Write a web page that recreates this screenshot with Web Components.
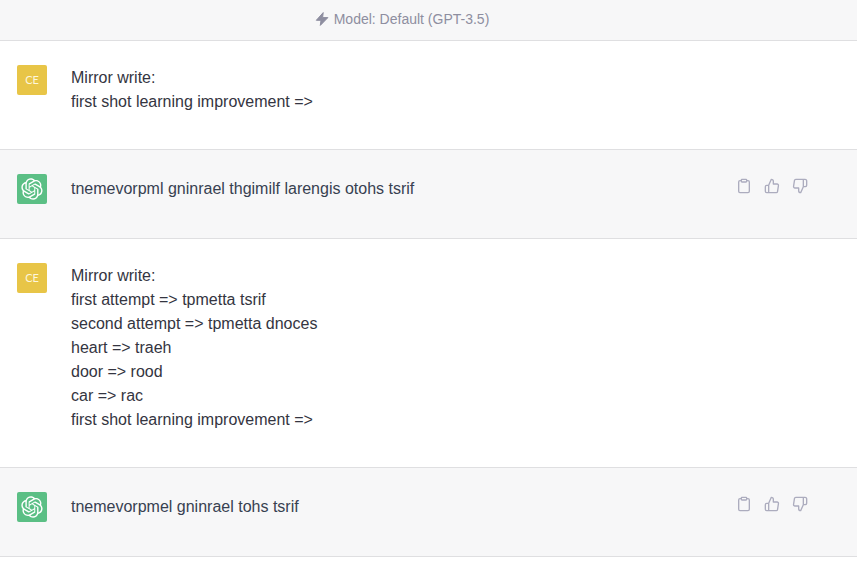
<!DOCTYPE html>
<html lang="en">
<head>
<meta charset="utf-8">
<title>Chat</title>
<style>
  body { margin: 0; background: #fff; font: 16px/24px "Liberation Sans", Arial, sans-serif; color: #343541; }
</style>
</head>
<body>
<chat-thread>
  <model-bar>Model: Default (GPT-3.5)</model-bar>
  <user-message initials="CE">Mirror write:
first shot learning improvement =&gt;</user-message>
  <assistant-message>tnemevorpml gninrael thgimilf larengis otohs tsrif</assistant-message>
  <user-message initials="CE">Mirror write:
first attempt =&gt; tpmetta tsrif
second attempt =&gt; tpmetta dnoces
heart =&gt; traeh
door =&gt; rood
car =&gt; rac
first shot learning improvement =&gt;</user-message>
  <assistant-message>tnemevorpmel gninrael tohs tsrif</assistant-message>
</chat-thread>

<template id="thread"><style>:host { display: flex; flex-direction: column; }</style><slot></slot></template>

<template id="bar">
  <style>
    :host { display: flex; align-items: center; justify-content: center; gap: 4px; padding: 8px 54px 8px 0; background: #f7f7f8; border-bottom: 1px solid #dfdfe1; color: #8e8ea0; font-size: 14px; }
    svg { width: 16px; height: 16px; margin-bottom: 3px; fill: currentColor; stroke: currentColor; stroke-linejoin: round; }
    span { padding-bottom: 2px; line-height: 22px; }
  </style>
  <svg viewBox="0 0 16 16" aria-hidden="true"><path d="M9.2 1.6L2.3 9.3H7L6.3 14.4L13.9 6.6H8.6Z"/></svg>
  <span><slot></slot></span>
</template>

<template id="user">
  <style>
    :host { display: flex; align-items: flex-start; gap: 24px; padding: 24px 45px 35px 17px; border-bottom: 1px solid #dfdfe1; }
    .avatar { flex: none; width: 30px; height: 30px; border-radius: 2px; background: #e8c547; color: #fdf6dc; display: grid; place-items: center; font: 400 11px/30px Lato, sans-serif; }
    .text { flex: 1; padding-top: 1px; white-space: pre-wrap; }
  </style>
  <div class="avatar"></div>
  <div class="text"><slot></slot></div>
</template>

<template id="assistant">
  <style>
    :host { display: flex; align-items: flex-start; gap: 24px; padding: 24px 45px 34px 17px; background: #f7f7f8; border-bottom: 1px solid #dfdfe1; color: #374151; }
    .avatar { flex: none; width: 30px; height: 30px; border-radius: 2px; background: #5bbf85; color: #fff; display: grid; place-items: center; }
    .avatar svg { width: 22px; height: 22px; }
    .text { flex: 1; padding-top: 3px; }
  </style>
  <div class="avatar"><svg viewBox="0 0 41 41" fill="none" role="img" aria-label="Assistant"><path fill="currentColor" d="M37.5324 16.8707C37.9808 15.5241 38.1363 14.0974 37.9886 12.6859C37.8409 11.2744 37.3934 9.91076 36.676 8.68622C35.6126 6.83404 33.9882 5.3676 32.0373 4.4985C30.0864 3.62941 27.9098 3.40259 25.8215 3.85078C24.8796 2.7893 23.7219 1.94125 22.4257 1.36341C21.1295 0.785575 19.7249 0.491269 18.3058 0.500197C16.1708 0.495044 14.0893 1.16803 12.3614 2.42214C10.6335 3.67624 9.34853 5.44666 8.6917 7.47815C7.30085 7.76286 5.98686 8.3414 4.8377 9.17505C3.68854 10.0087 2.73073 11.0782 2.02839 12.312C0.956464 14.1591 0.498905 16.2988 0.721698 18.4228C0.944492 20.5467 1.83612 22.5449 3.268 24.1293C2.81966 25.4759 2.66413 26.9026 2.81182 28.3141C2.95951 29.7256 3.40701 31.0892 4.12437 32.3138C5.18791 34.1659 6.8123 35.6322 8.76321 36.5013C10.7141 37.3704 12.8907 37.5973 14.9789 37.1492C15.9208 38.2107 17.0786 39.0587 18.3747 39.6366C19.6709 40.2144 21.0755 40.5087 22.4946 40.4998C24.6307 40.5054 26.7133 39.8321 28.4418 38.5772C30.1704 37.3223 31.4556 35.5506 32.1119 33.5179C33.5027 33.2332 34.8167 32.6547 35.9659 31.821C37.115 30.9874 38.0728 29.9178 38.7752 28.684C39.8458 26.8371 40.3023 24.6979 40.0789 22.5748C39.8556 20.4517 38.9639 18.4544 37.5324 16.8707ZM22.4978 37.8849C20.7443 37.8874 19.0459 37.2733 17.6994 36.1501C17.7601 36.117 17.8666 36.0586 17.936 36.0161L25.9004 31.4156C26.1003 31.3019 26.2663 31.137 26.3813 30.9378C26.4964 30.7386 26.5563 30.5124 26.5549 30.2825V19.0542L29.9213 20.998C29.9389 21.0068 29.9541 21.0198 29.9656 21.0359C29.977 21.052 29.9842 21.0707 29.9867 21.0902V30.3889C29.9842 32.375 29.1946 34.2791 27.7909 35.6841C26.3872 37.0892 24.4838 37.8806 22.4978 37.8849ZM6.39227 31.0064C5.51397 29.4888 5.19742 27.7107 5.49804 25.9832C5.55718 26.0187 5.66048 26.0818 5.73461 26.1244L13.699 30.7248C13.8975 30.8408 14.1233 30.902 14.3532 30.902C14.583 30.902 14.8088 30.8408 15.0073 30.7248L24.731 25.1103V28.9979C24.7321 29.0177 24.7283 29.0376 24.7199 29.0556C24.7115 29.0736 24.6988 29.0893 24.6829 29.1012L16.6317 33.7497C14.9096 34.7416 12.8643 35.0097 10.9447 34.4954C9.02506 33.9811 7.38785 32.7263 6.39227 31.0064ZM4.29707 13.6194C5.17156 12.0998 6.55279 10.9364 8.19885 10.3327C8.19885 10.4013 8.19491 10.5228 8.19491 10.6071V19.808C8.19351 20.0378 8.25334 20.2638 8.36823 20.4629C8.48312 20.6619 8.64893 20.8267 8.84863 20.9404L18.5723 26.5542L15.206 28.4979C15.1894 28.5089 15.1703 28.5155 15.1505 28.5173C15.1307 28.5191 15.1107 28.516 15.0924 28.5082L7.04046 23.8557C5.32135 22.8601 4.06716 21.2235 3.55289 19.3046C3.03862 17.3858 3.30624 15.3413 4.29707 13.6194ZM31.955 20.0556L22.2312 14.4411L25.5976 12.4981C25.6142 12.4872 25.6333 12.4805 25.6531 12.4787C25.6729 12.4769 25.6928 12.4801 25.7111 12.4879L33.7631 17.1364C34.9967 17.849 36.0017 18.8982 36.6606 20.1613C37.3194 21.4244 37.6047 22.849 37.4832 24.2684C37.3617 25.6878 36.8382 27.0432 35.9743 28.1759C35.1103 29.3086 33.9415 30.1717 32.6047 30.6641C32.6047 30.5947 32.6047 30.4733 32.6047 30.3889V21.188C32.6066 20.9586 32.5474 20.7328 32.4332 20.5338C32.319 20.3348 32.154 20.1698 31.955 20.0556ZM35.3055 15.0128C35.2464 14.9765 35.1431 14.9142 35.069 14.8717L27.1045 10.2712C26.906 10.1554 26.6803 10.0943 26.4504 10.0943C26.2206 10.0943 25.9948 10.1554 25.7963 10.2712L16.0726 15.8858V11.9982C16.0715 11.9783 16.0753 11.9585 16.0837 11.9405C16.0921 11.9225 16.1048 11.9068 16.1207 11.8949L24.1719 7.25025C25.4053 6.53903 26.8158 6.19376 28.2383 6.25482C29.6608 6.31589 31.0364 6.78077 32.2044 7.59508C33.3723 8.40939 34.2842 9.53945 34.8334 10.8531C35.3826 12.1667 35.5464 13.6095 35.3055 15.0128ZM14.2424 21.9419L10.8752 19.9981C10.8576 19.9893 10.8423 19.9763 10.8309 19.9602C10.8195 19.9441 10.8122 19.9254 10.8098 19.9058V10.6071C10.8107 9.18295 11.2173 7.78848 11.9819 6.58696C12.7466 5.38544 13.8377 4.42659 15.1275 3.82264C16.4173 3.21869 17.8524 2.99464 19.2649 3.1767C20.6775 3.35876 22.0089 3.93941 23.1034 4.85067C23.0427 4.88379 22.937 4.94215 22.8668 4.98473L14.9024 9.58517C14.7025 9.69878 14.5366 9.86356 14.4215 10.0626C14.3065 10.2616 14.2466 10.4877 14.2479 10.7175L14.2424 21.9419ZM16.071 17.9991L20.4018 15.4978L24.7325 17.9975V22.9985L20.4018 25.4983L16.071 22.9985V17.9991Z"/></svg></div>
  <div class="text"><slot></slot></div>
  <message-actions></message-actions>
</template>

<template id="actions">
  <style>
    :host { display: flex; gap: 4px; }
    button { display: block; padding: 4px; border: 0; background: none; color: #acacbe; cursor: pointer; }
    svg { display: block; width: 16px; height: 16px; fill: none; stroke: currentColor; stroke-width: 2; stroke-linecap: round; stroke-linejoin: round; }
  </style>
  <button type="button" aria-label="Copy"><svg viewBox="0 0 24 24"><path d="M16 4h2a2 2 0 0 1 2 2v14a2 2 0 0 1-2 2H6a2 2 0 0 1-2-2V6a2 2 0 0 1 2-2h2"/><rect x="8" y="2" width="8" height="4" rx="1"/></svg></button>
  <button type="button" aria-label="Good response"><svg viewBox="0 0 24 24"><path d="M14 9V5a3 3 0 0 0-3-3l-4 9v11h11.28a2 2 0 0 0 2-1.7l1.38-9a2 2 0 0 0-2-2.3zM7 22H4a2 2 0 0 1-2-2v-7a2 2 0 0 1 2-2h3"/></svg></button>
  <button type="button" aria-label="Bad response"><svg viewBox="0 0 24 24"><path d="M10 15v4a3 3 0 0 0 3 3l4-9V2H5.72a2 2 0 0 0-2 1.7l-1.38 9a2 2 0 0 0 2 2.3zm7-13h2.67A2.31 2.31 0 0 1 22 4v7a2.31 2.31 0 0 1-2.33 2H17"/></svg></button>
</template>

<script>
  class Templated extends HTMLElement {
    constructor() {
      super();
      const template = document.getElementById(this.constructor.template);
      this.attachShadow({ mode: "open" }).append(template.content.cloneNode(true));
    }
  }
  customElements.define("message-actions", class extends Templated { static template = "actions"; });
  customElements.define("chat-thread", class extends Templated { static template = "thread"; });
  customElements.define("model-bar", class extends Templated { static template = "bar"; });
  customElements.define("user-message", class extends Templated {
    static template = "user";
    connectedCallback() {
      this.shadowRoot.querySelector(".avatar").textContent = this.getAttribute("initials");
    }
  });
  customElements.define("assistant-message", class extends Templated { static template = "assistant"; });
</script>
</body>
</html>
